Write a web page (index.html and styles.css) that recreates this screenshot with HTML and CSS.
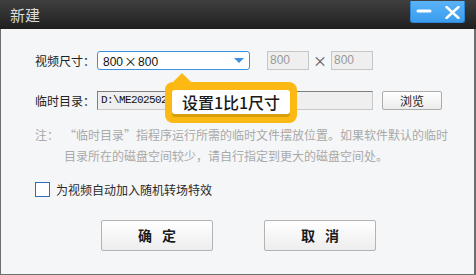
FILE: index.html
```html
<!DOCTYPE html>
<html lang="zh-CN">
<head>
<meta charset="utf-8">
<title>新建</title>
<link rel="stylesheet" href="styles.css">
</head>
<body>
<div class="window">
  <div class="titlebar">
    <span class="title">新建</span>
    <div class="winbtns">
      <span class="wb wb-min"><svg width="16" height="4" viewBox="0 0 16 4"><rect x="0.5" y="0.5" width="15" height="3" rx="1.5" fill="#fff"/></svg></span>
      <span class="wb wb-close"><svg width="15" height="13" viewBox="0 0 15 13"><path d="M1.5 1 L13.5 12 M13.5 1 L1.5 12" stroke="#fff" stroke-width="2.4" stroke-linecap="round"/></svg></span>
    </div>
  </div>
  <div class="content">
    <div class="row row-size">
      <span class="label">视频尺寸：</span>
      <div class="select">
        <span class="select-text">800<span class="mul">×</span>800</span>
        <span class="caret"></span>
      </div>
      <span class="num">800</span>
      <span class="times">×</span>
      <span class="num">800</span>
    </div>
    <div class="row row-dir">
      <span class="label">临时目录：</span>
      <div class="path">D:\ME202502</div>
      <div class="btn-browse">浏览</div>
    </div>
    <div class="note">
      <span class="note-head">注：</span>
      <span class="note-body">“临时目录”指程序运行所需的临时文件摆放位置。如果软件默认的临时<br>目录所在的磁盘空间较少，请自行指定到更大的磁盘空间处。</span>
    </div>
    <label class="check-row">
      <span class="checkbox"></span>
      <span class="check-text">为视频自动加入随机转场特效</span>
    </label>
    <div class="actions">
      <div class="btn">确定</div>
      <div class="btn">取消</div>
    </div>
  </div>
  <div class="callout">
    <span class="callout-arrow"></span>
    <div class="callout-inner">设置1比1尺寸</div>
  </div>
</div>
</body>
</html>
```
FILE: styles.css
```css
* { box-sizing: border-box; }
html, body { margin: 0; padding: 0; }
body {
  width: 476px;
  height: 275px;
  overflow: hidden;
  font-family: "Noto Sans CJK SC", "Liberation Sans", sans-serif;
  font-size: 12px;
  color: #222;
  background: #f5f6f8;
}
.window {
  position: relative;
  width: 476px;
  height: 275px;
  background: #f5f6f8;
  border: 1px solid #6e6e6e;
  border-top: none;
  border-right-width: 2px;
}
.titlebar {
  height: 29px;
  margin: 0 -2px 0 -1px;
  background: linear-gradient(#404040, #1f1f1f);
  display: flex;
  justify-content: space-between;
  align-items: flex-start;
}
.title {
  color: #dcdcdc;
  font-size: 15px;
  line-height: 29px;
  padding-left: 10px;
}
.winbtns {
  display: flex;
  margin-top: 1px;
  margin-right: 11px;
  width: 55px;
  height: 22px;
  background: linear-gradient(#5ab3f7, #3a9cee);
  border: 1px solid #2f86d6;
  border-top: none;
  border-radius: 0 0 3px 3px;
}
.wb {
  flex: 1;
  display: flex;
  align-items: center;
  justify-content: center;
}
.wb-min { padding-left: 1px; padding-bottom: 1px; }
.wb-close { padding-left: 4px; padding-top: 1px; }
.content {
  padding: 21px 0 0 34px;
}
.row {
  display: flex;
  align-items: center;
  height: 20px;
}
.label {
  width: 62px;
  color: #222;
  white-space: nowrap;
}
.select {
  width: 153px;
  height: 19px;
  background: #fff;
  border: 1px solid #3d8fe0;
  border-radius: 3px;
  display: flex;
  align-items: center;
  justify-content: space-between;
  padding: 0 4px 0 5px;
}
.select-text {
  font-family: "Liberation Sans", "Noto Sans CJK SC", sans-serif;
  font-size: 12px;
  color: #111;
}
.mul {
  font-family: "Noto Sans CJK SC", sans-serif;
  font-size: 13px;
  padding: 0 1px;
}
.caret {
  width: 0;
  height: 0;
  border-left: 5px solid transparent;
  border-right: 5px solid transparent;
  border-top: 5px solid #3d8fe0;
  margin-right: 1px;
}
.num {
  width: 42px;
  height: 19px;
  background: #efefef;
  border: 1px solid #c6c6c6;
  color: #9a9a9a;
  font-family: "Liberation Sans", sans-serif;
  font-size: 12px;
  line-height: 17px;
  padding-left: 2px;
}
.row-size .select { margin-right: 17px; }
.times {
  width: 22px;
  text-align: center;
  color: #555;
  font-size: 14px;
}
.row-dir { margin-top: 20px; }
.path {
  width: 276px;
  height: 19px;
  background: #efefef;
  border: 1px solid #7e7e7e;
  border-right-color: #c8c8c8;
  border-bottom-color: #c8c8c8;
  font-family: "Liberation Mono", monospace;
  font-size: 11px;
  letter-spacing: -0.6px;
  line-height: 17px;
  padding-left: 3px;
  color: #111;
  overflow: hidden;
  white-space: nowrap;
}
.btn-browse {
  margin-left: 9px;
  width: 60px;
  height: 19px;
  border: 1px solid #acacac;
  border-radius: 2px;
  background: linear-gradient(#ffffff, #ececec);
  text-align: center;
  line-height: 17px;
  color: #1a1a1a;
}
.note {
  display: flex;
  margin-top: 14px;
  color: #a9a9a9;
  line-height: 21px;
}
.note-head { width: 29px; white-space: nowrap; }
.note-body { white-space: nowrap; }
.check-row {
  display: flex;
  align-items: center;
  margin-top: 16px;
  height: 15px;
}
.checkbox {
  width: 15px;
  height: 15px;
  border: 1px solid #2b6fbf;
  background: #fff;
  margin-right: 6px;
}
.check-text { color: #2a2a2a; }
.actions {
  display: flex;
  gap: 51px;
  margin-top: 23px;
  padding-left: 66px;
}
.btn {
  width: 112px;
  height: 31px;
  border: 1px solid #b3b3b3;
  border-radius: 2px;
  background: linear-gradient(#ffffff, #ededed);
  font-size: 14px;
  font-weight: bold;
  letter-spacing: 10px;
  padding-left: 10px;
  text-align: center;
  line-height: 29px;
  color: #1a1a1a;
}
.callout {
  position: absolute;
  left: 164px;
  top: 82px;
  width: 132px;
  height: 41px;
  background: #fcb914;
  border-radius: 8px;
  padding: 8px 7px 7px 7px;
}
.callout-arrow {
  position: absolute;
  left: 8px;
  top: -9px;
  width: 0;
  height: 0;
  border-left: 9px solid transparent;
  border-right: 9px solid transparent;
  border-bottom: 9px solid #fcb914;
}
.callout-inner {
  height: 24px;
  background: #fff;
  border-radius: 3px;
  box-shadow: 0 3px 0 #d99e0c;
  text-align: center;
  font-size: 16px;
  font-weight: 500;
  line-height: 24px;
  color: #1a1a1a;
  white-space: nowrap;
}
```
